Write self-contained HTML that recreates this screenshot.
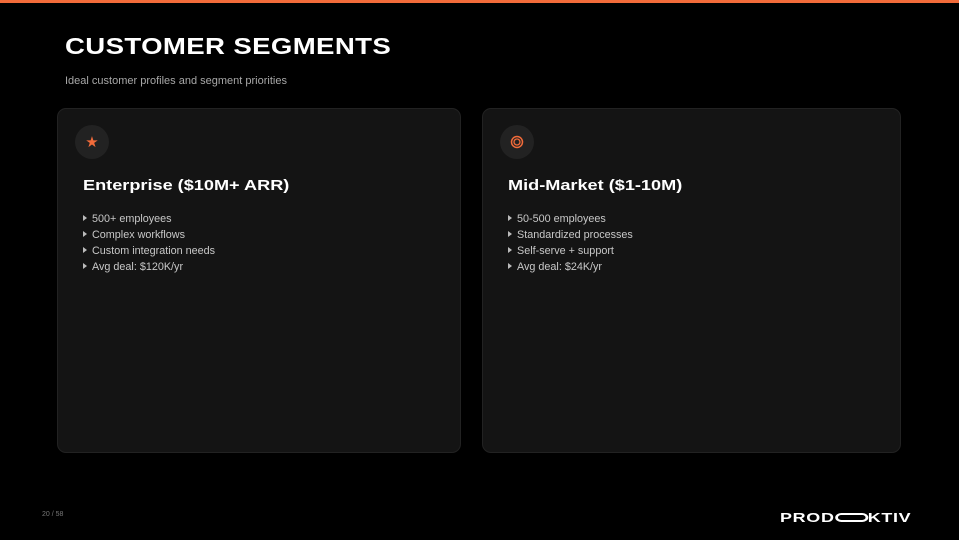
<!DOCTYPE html>
<html><head><style>
*{margin:0;padding:0;box-sizing:border-box}
body{width:959px;height:540px;background:#000;position:relative;overflow:hidden;font-family:"Liberation Sans",sans-serif;color:#fff}
.bar{position:absolute;left:0;top:0;width:959px;height:3px;background:#f26b3a}
h1{position:absolute;left:65px;top:33px;font-size:23px;font-weight:900;letter-spacing:0.3px;transform:scaleX(1.2);transform-origin:left}
.sub{position:absolute;left:65px;top:75px;font-size:11px;color:#a8a8a8}
.card{position:absolute;top:108px;height:345px;background:#141414;border:1px solid #222;border-radius:9px}
.ic{position:absolute;left:17px;top:16px;width:34px;height:34px;border-radius:50%;background:#222;display:flex;align-items:center;justify-content:center;color:#f26b3a;font-size:15px}
.t{position:absolute;left:25px;top:69px;font-size:14.5px;font-weight:700;transform:scaleX(1.25);transform-origin:left}
ul{position:absolute;left:25px;top:102px;list-style:none;font-size:10.8px;color:#c8c8c8;line-height:16px}
ul li:before{content:"";display:inline-block;border-left:4px solid #bbb;border-top:3px solid transparent;border-bottom:3px solid transparent;margin-right:5px;vertical-align:1px}
.pg{position:absolute;left:42px;top:511px;font-size:7px;color:#777}
.logo{position:absolute;left:780px;top:510px;font-size:13px;font-weight:900;letter-spacing:0.5px;transform:scaleX(1.38);transform-origin:left}
</style></head><body>
<div class="bar"></div>
<h1>CUSTOMER SEGMENTS</h1>
<div class="sub">Ideal customer profiles and segment priorities</div>
<div class="card" style="left:57px;width:404px">
<div class="ic">★</div>
<div class="t">Enterprise ($10M+ ARR)</div>
<ul><li>500+ employees</li><li>Complex workflows</li><li>Custom integration needs</li><li>Avg deal: $120K/yr</li></ul>
</div>
<div class="card" style="left:482px;width:419px">
<div class="ic"><svg width="14" height="14" viewBox="0 0 14 14"><circle cx="7" cy="7" r="5.5" fill="none" stroke="#f26b3a" stroke-width="1.5"/><circle cx="7" cy="7" r="3" fill="none" stroke="#f26b3a" stroke-width="1.3"/></svg></div>
<div class="t">Mid-Market ($1-10M)</div>
<ul><li>50-500 employees</li><li>Standardized processes</li><li>Self-serve + support</li><li>Avg deal: $24K/yr</li></ul>
</div>
<div class="pg">20 / 58</div>
<div class="logo">PROD<span style="display:inline-block;width:24px;height:9px;border:2px solid #fff;border-radius:5px;vertical-align:0"></span>KTIV</div>
</body></html>
